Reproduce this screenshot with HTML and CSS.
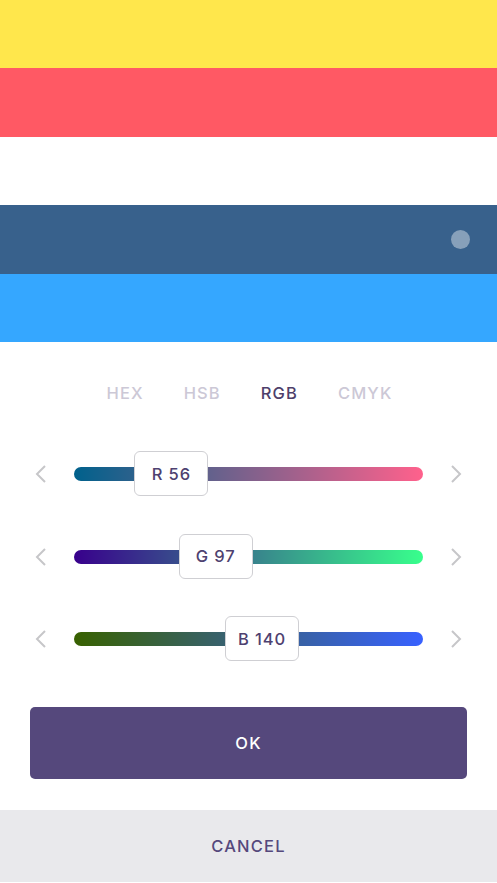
FILE: index.html
```html
<!DOCTYPE html>
<html lang="en">
<head>
    <meta charset="UTF-8">
    <meta name="viewport" content="width=device-width, initial-scale=1.0">
    <title>Color Picker</title>
    <link rel="stylesheet" href="styles.css">
</head>
<body>
    <div class="palette">
        <div class="swatch" style="background-color: #ffe74c;"></div>
        <div class="swatch" style="background-color: #ff5964;"></div>
        <div class="swatch" style="background-color: #ffffff;"></div>
        <div class="swatch selected" style="background-color: #38618c;">
            <span class="selected-dot"></span>
        </div>
        <div class="swatch" style="background-color: #35a7ff;"></div>
    </div>

    <div class="tabs">
        <span class="tab">HEX</span>
        <span class="tab">HSB</span>
        <span class="tab active">RGB</span>
        <span class="tab">CMYK</span>
    </div>

    <div class="sliders">
        <div class="slider-row">
            <svg class="chevron" width="11" height="18" viewBox="0 0 11 18"><path d="M10 1 L2 9 L10 17" /></svg>
            <div class="track" style="background: linear-gradient(90deg, rgb(0,97,140), rgb(255,97,140));">
                <div class="thumb" style="left: 60.4px;">R 56</div>
            </div>
            <svg class="chevron" width="11" height="18" viewBox="0 0 11 18"><path d="M1 1 L9 9 L1 17" /></svg>
        </div>
        <div class="slider-row">
            <svg class="chevron" width="11" height="18" viewBox="0 0 11 18"><path d="M10 1 L2 9 L10 17" /></svg>
            <div class="track" style="background: linear-gradient(90deg, rgb(56,0,140), rgb(56,255,140));">
                <div class="thumb" style="left: 104.6px;">G 97</div>
            </div>
            <svg class="chevron" width="11" height="18" viewBox="0 0 11 18"><path d="M1 1 L9 9 L1 17" /></svg>
        </div>
        <div class="slider-row">
            <svg class="chevron" width="11" height="18" viewBox="0 0 11 18"><path d="M10 1 L2 9 L10 17" /></svg>
            <div class="track" style="background: linear-gradient(90deg, rgb(56,97,0), rgb(56,97,255));">
                <div class="thumb" style="left: 151px;">B 140</div>
            </div>
            <svg class="chevron" width="11" height="18" viewBox="0 0 11 18"><path d="M1 1 L9 9 L1 17" /></svg>
        </div>
    </div>

    <button class="ok-btn">OK</button>
    <button class="cancel-btn">CANCEL</button>
</body>
</html>
```

FILE: styles.css
```css
body {
    font-family: Inter, "Open Sans", Arial, sans-serif;
    margin: 0;
    background: #ffffff;
    width: 497px;
}

.palette {
    display: flex;
    flex-direction: column;
    height: 342px;
}

.swatch {
    flex: 1;
    display: flex;
    align-items: center;
    justify-content: flex-end;
    padding-right: 27px;
}

.selected-dot {
    width: 19px;
    height: 19px;
    border-radius: 50%;
    background-color: rgba(255, 255, 255, 0.4);
}

.tabs {
    display: flex;
    justify-content: center;
    gap: 40px;
    height: 40px;
    align-items: center;
    margin-top: 31px;
    padding-left: 2px;
}

.tab {
    font-size: 16.5px;
    font-weight: 500;
    letter-spacing: 1.1px;
    color: #ccc8d6;
}

.tab.active {
    color: #4e3f6b;
}

.sliders {
    display: flex;
    flex-direction: column;
    gap: 37.5px;
    margin-top: 38.5px;
}

.slider-row {
    display: flex;
    align-items: center;
    height: 45px;
    padding: 0 35px;
    gap: 28px;
}

.chevron {
    flex-shrink: 0;
    fill: none;
    stroke: #c6c6c9;
    stroke-width: 2;
}

.track {
    position: relative;
    width: 349px;
    height: 14px;
    border-radius: 7px;
}

.thumb {
    position: absolute;
    top: -16px;
    width: 72px;
    height: 43px;
    border: 1px solid #cfcfd3;
    border-radius: 6px;
    background: #ffffff;
    display: flex;
    align-items: center;
    justify-content: center;
    font-size: 16.5px;
    font-weight: 500;
    letter-spacing: 0.9px;
    color: #4e4170;
}

button {
    display: block;
    border: none;
    font-family: inherit;
    font-size: 16.5px;
    font-weight: 500;
    letter-spacing: 1.2px;
    cursor: pointer;
}

.ok-btn {
    width: 437px;
    height: 72px;
    margin: 45px 30px 0;
    border-radius: 5px;
    background-color: #55487c;
    color: #ffffff;
}

.cancel-btn {
    width: 100%;
    height: 72px;
    margin-top: 31px;
    background-color: #e9e9ec;
    color: #55487c;
}
```
